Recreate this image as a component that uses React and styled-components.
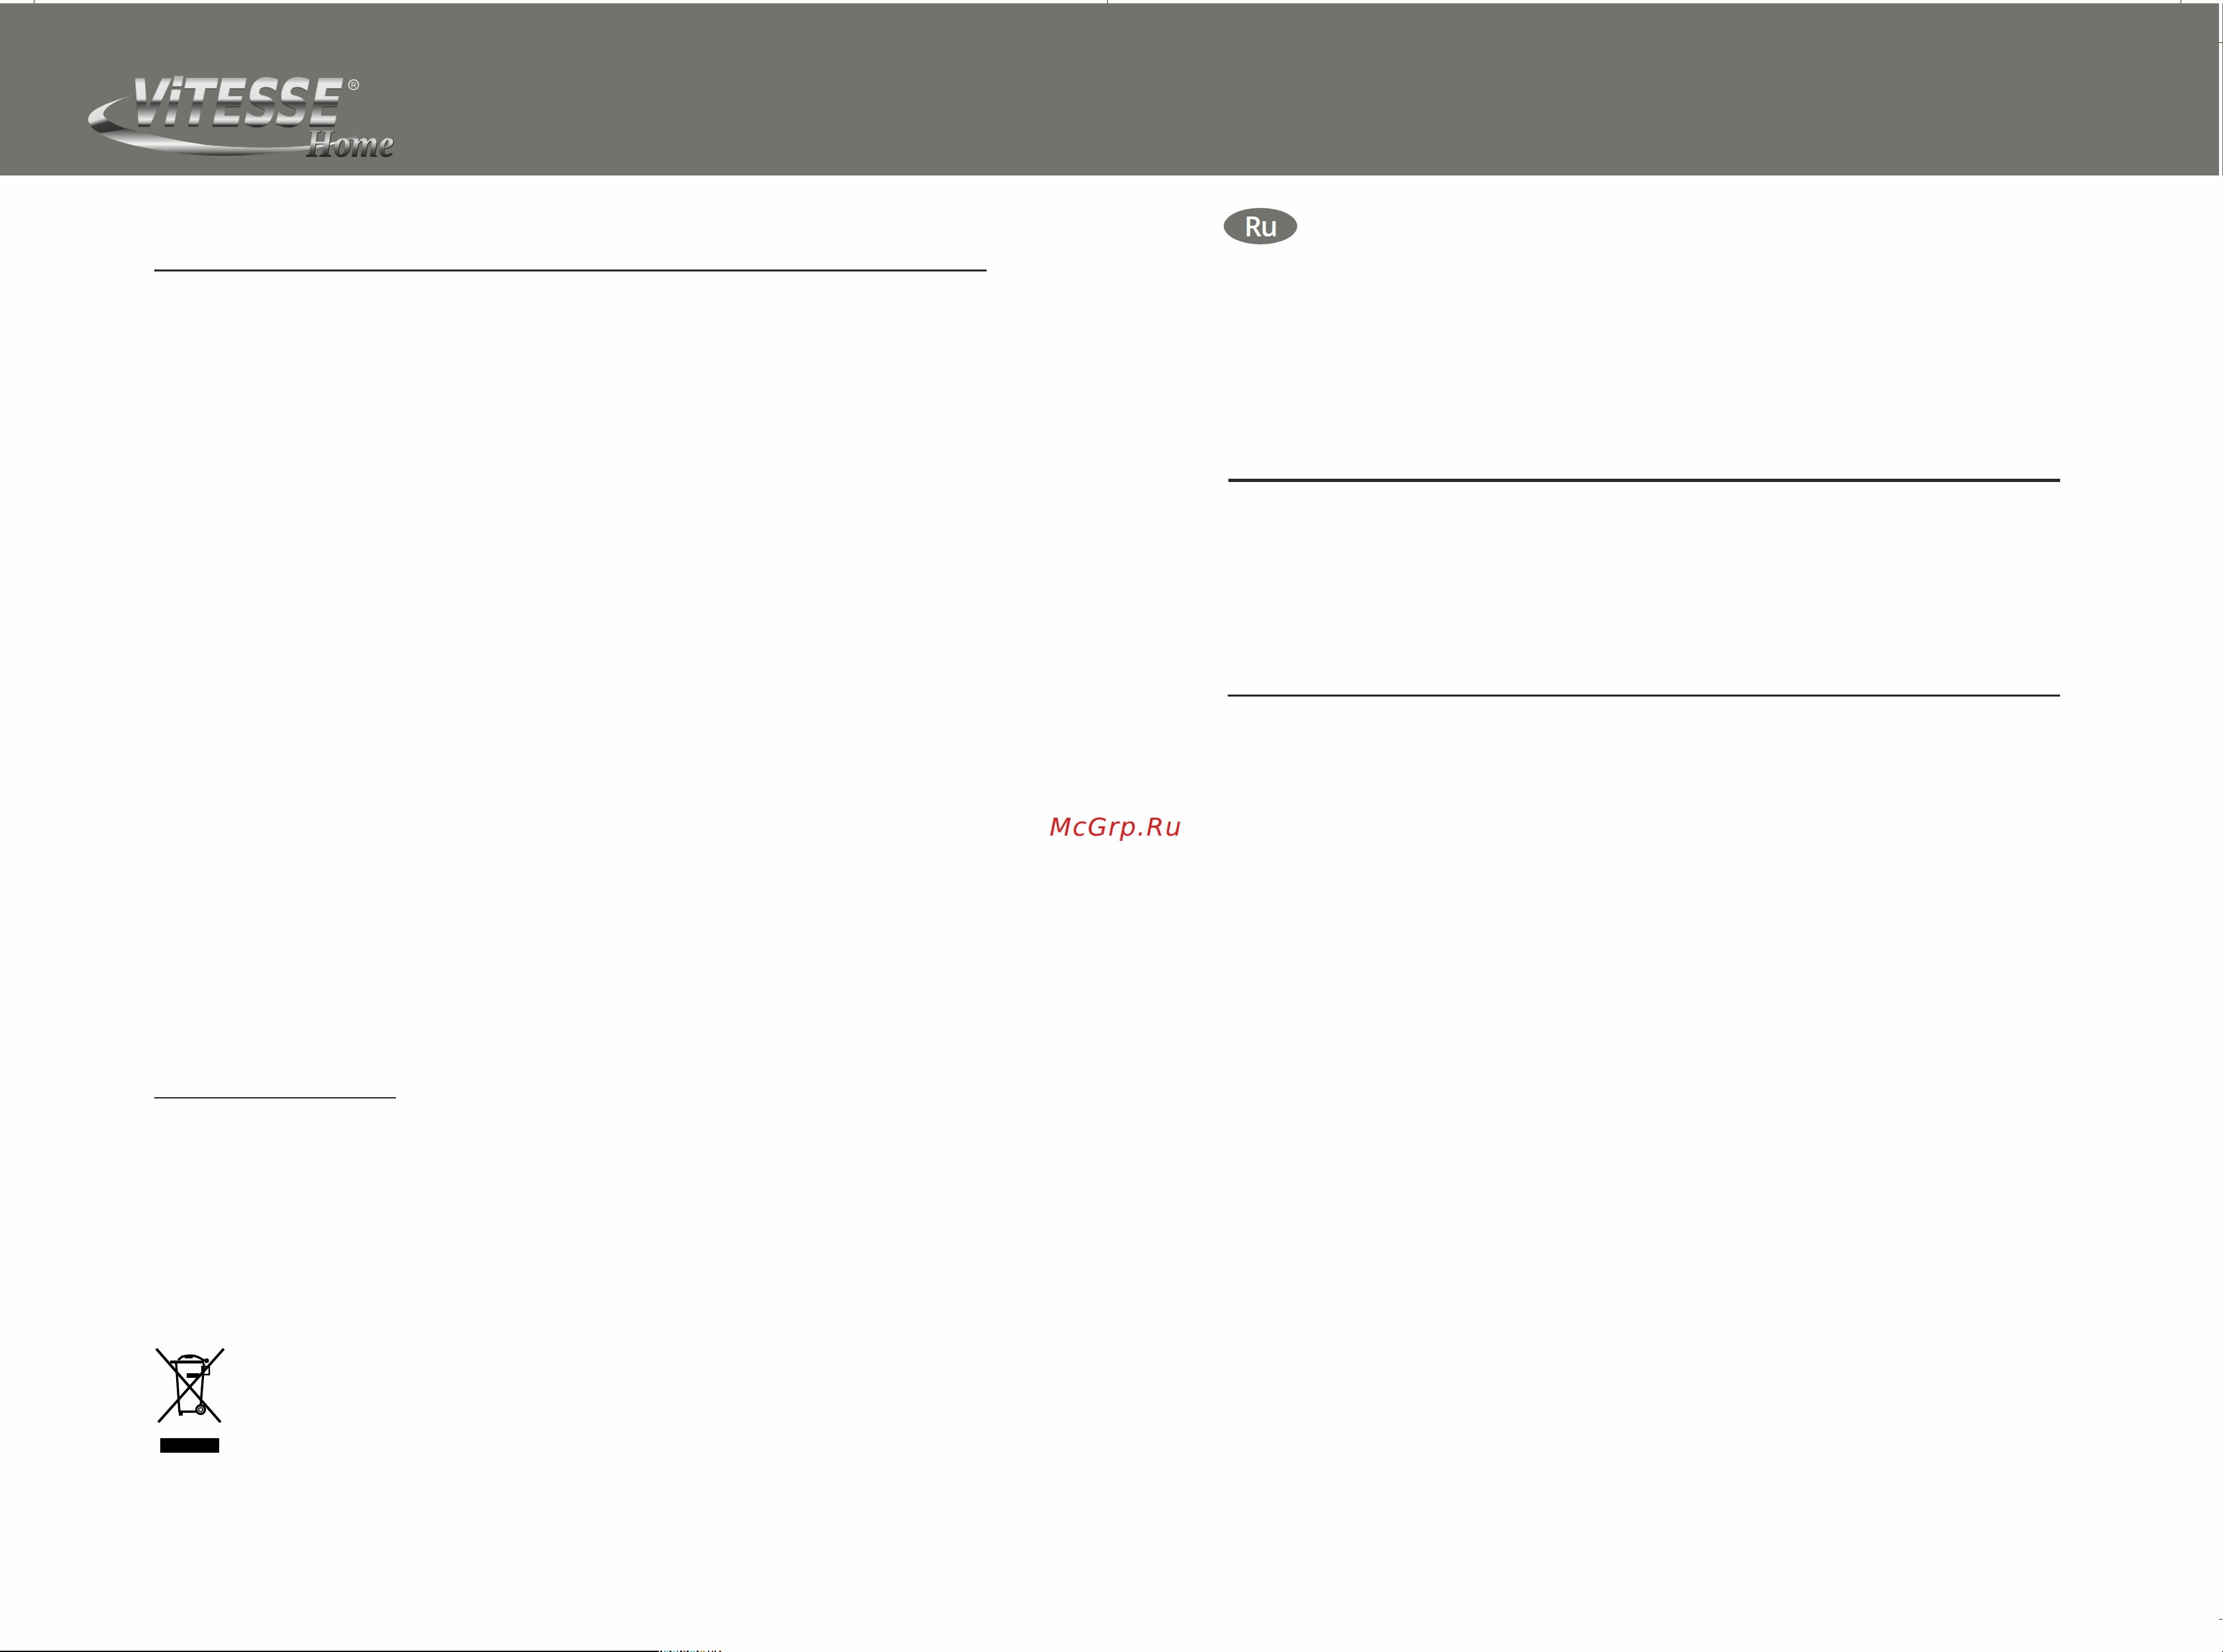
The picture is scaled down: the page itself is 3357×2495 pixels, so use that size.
import React from "react";
import styled, { createGlobalStyle } from "styled-components";

const Global = createGlobalStyle`
  html, body { margin: 0; padding: 0; background: #fefefe; }
`;

const Page = styled.div`
  position: relative;
  width: 3357px;
  height: 2495px;
  overflow: hidden;
  display: flex;
  flex-direction: column;
  background: #fefefe;
  font-family: "Open Sans", "Liberation Sans", sans-serif;
`;

const TopStrip = styled.div`
  height: 5px;
  flex: none;
  display: flex;
  padding-left: 51px;
  gap: 1620px;
`;

const TickV = styled.i`
  display: block;
  width: 1px;
  height: 5px;
  background: #2b2a29;
`;

const BandRow = styled.div`
  height: 260px;
  flex: none;
  display: flex;
`;

const Band = styled.header`
  width: 3351px;
  background: #73736d;
  padding: 95px 0 0 133px;
  box-sizing: border-box;
  svg { display: block; overflow: visible; }
`;

const EdgeLine = styled.div`
  width: 1px;
  margin-left: 5px;
  background: #73736d;
`;

const Content = styled.main`
  flex: 1;
  display: grid;
  grid-template-columns: 1854px 1fr;
`;

const LeftColumn = styled.section`
  padding: 142px 0 0 233px;
  display: flex;
  flex-direction: column;
  align-items: flex-start;
`;

const RightColumn = styled.section`
  padding-top: 49px;
  display: flex;
  flex-direction: column;
  align-items: flex-start;
`;

const Rule = styled.hr`
  margin: ${(p) => p.$top || 0}px 0 0 ${(p) => p.$left || 0}px;
  border: 0;
  width: ${(p) => p.$width}px;
  height: ${(p) => p.$thick}px;
  background: #2b2a29;
  flex: none;
`;

const LangBadge = styled.div`
  width: 111px;
  height: 55px;
  margin-left: -6px;
  border-radius: 50%;
  background: #73736d;
  color: #fff;
  display: flex;
  align-items: center;
  justify-content: center;
  font-size: 41px;
  font-weight: 600;
  letter-spacing: -1.5px;
  line-height: 1;
`;

const RecycleBox = styled.div`
  margin-top: 376px;
  width: 110px;
  height: 160px;
  flex: none;
  svg { display: block; }
`;

const Watermark = styled.div`
  position: absolute;
  left: 1585px;
  top: 1230px;
  color: #d9201f;
  font-family: "DejaVu Sans", sans-serif;
  font-style: oblique;
  font-size: 38px;
  letter-spacing: 1.9px;
  line-height: 1;
  white-space: nowrap;
`;

const BottomStrip = styled.footer`
  height: 2px;
  flex: none;
  display: flex;
`;

const BottomLine = styled.div`
  width: 995px;
  background: #111;
`;

const RegMarks = styled.div`
  display: flex;
  margin-left: 2px;
`;

const RegDash = styled.i`
  display: block;
  height: 2px;
  width: ${(p) => p.$w}px;
  margin-right: ${(p) => p.$gap}px;
  background: ${(p) => p.$c};
`;

const SideTick = styled.i`
  position: absolute;
  left: 3351px;
  top: ${(p) => p.$y}px;
  width: 5px;
  height: 1px;
  background: #2b2a29;
`;

const CornerDot = styled.i`
  position: absolute;
  left: 3356px;
  top: 2493px;
  width: 1px;
  height: 2px;
  background: #2b2a29;
`;

const BrandWord = styled.text`
  font-family: "DejaVu Sans", "Liberation Sans", sans-serif;
  font-weight: 700;
  font-size: 96px;
  filter: drop-shadow(0.5px 1.5px 0 #2a2a28);
`;

const BrandHome = styled.text`
  font-family: "Liberation Serif", serif;
  font-style: italic;
  font-weight: 700;
  font-size: 60px;
  filter: drop-shadow(1px 1.5px 0 #262624);
`;

const BrandReg = styled.text`
  font-family: "Liberation Sans", sans-serif;
  font-size: 11px;
`;

const dashes = [
  ["#111", 3, 3], ["#2ad", 2, 2], ["#2dd", 2, 2], ["#111", 3, 3], ["#2dd", 2, 3], ["#36c", 2, 3],
  ["#111", 3, 2], ["#a52", 3, 2], ["#111", 3, 3], ["#2dd", 2, 2], ["#2dd", 2, 3], ["#111", 3, 3],
  ["#c80", 2, 2], ["#d61", 2, 5], ["#228", 2, 4], ["#a11", 2, 2], ["#111", 2, 5], ["#a11", 3, 0],
];

function Logo() {
  return (
    <svg width="470" height="150" viewBox="133 100 470 150" aria-label="Vitesse Home">
      <defs>
        <linearGradient id="chrome" x1="0" y1="120" x2="0" y2="190" gradientUnits="userSpaceOnUse">
          <stop offset="0" stopColor="#b9bab8" />
          <stop offset="0.08" stopColor="#e6e7e6" />
          <stop offset="0.42" stopColor="#e2e3e2" />
          <stop offset="0.5" stopColor="#3f3f3d" />
          <stop offset="0.62" stopColor="#6f706e" />
          <stop offset="0.86" stopColor="#e9eae9" />
          <stop offset="0.93" stopColor="#b5b5b3" />
          <stop offset="1" stopColor="#232321" />
        </linearGradient>
        <linearGradient id="swoosh" x1="133" y1="143" x2="160" y2="235" gradientUnits="userSpaceOnUse">
          <stop offset="0" stopColor="#f2f2f1" />
          <stop offset="0.42" stopColor="#dcdcdb" />
          <stop offset="0.5" stopColor="#3a3a38" />
          <stop offset="1" stopColor="#1e1e1c" />
        </linearGradient>
        <linearGradient id="swooshMid" x1="0" y1="195" x2="0" y2="236" gradientUnits="userSpaceOnUse">
          <stop offset="0" stopColor="#4b4b49" />
          <stop offset="0.55" stopColor="#f4f4f3" />
          <stop offset="0.8" stopColor="#8c8c8a" />
          <stop offset="1" stopColor="#1c1c1a" />
        </linearGradient>
        <linearGradient id="homeFill" x1="0" y1="195" x2="0" y2="238" gradientUnits="userSpaceOnUse">
          <stop offset="0" stopColor="#8b8b89" />
          <stop offset="0.45" stopColor="#dedede" />
          <stop offset="0.72" stopColor="#5a5a58" />
          <stop offset="1" stopColor="#1f1f1d" />
        </linearGradient>
      </defs>
      <path
        d="M203 143 C165 154 133 165 133 181 C134 200 170 215 240 227 C290 236 340 237 390 233 C420 231 450 228 473 225 C500 220 530 210 549 202 C520 212 495 217 469 220 C420 224 370 224 312 219 C265 213 215 200 180 191 C165 185 156 180 156 172 C158 160 180 150 203 143 Z"
        fill="url(#swooshMid)"
      />
      <path
        d="M203 143 C165 154 133 165 133 181 C134 189 141 196 152 201 L190 195 C175 188 156 180 156 172 C158 160 180 150 203 143 Z"
        fill="url(#swoosh)"
      />
      <g transform="translate(36.5 0) skewX(-11)">
        <BrandWord
          x="191"
          y="189"
          textLength="319"
          lengthAdjust="spacingAndGlyphs"
          fill="url(#chrome)"
          stroke="url(#chrome)"
          strokeWidth="2"
        >
          ViTESSE
        </BrandWord>
      </g>
      <circle cx="534" cy="128" r="7.5" fill="none" stroke="#f2f2f2" strokeWidth="1.5" />
      <BrandReg x="530" y="132" fill="#f2f2f2">R</BrandReg>
      <BrandHome x="462" y="236" textLength="133" lengthAdjust="spacingAndGlyphs" fill="url(#homeFill)">
        Home
      </BrandHome>
    </svg>
  );
}

function RecycleBin() {
  return (
    <svg width="110" height="160" viewBox="233 2035 110 160" aria-label="WEEE">
      <g stroke="#000" fill="none">
        <path d="M236 2037 L333 2148 M338 2037 L239 2148" strokeWidth="4" />
        <path d="M266 2059 L271 2133 M308 2059 L303 2123 M271 2132 L297 2132" strokeWidth="3.4" />
        <path d="M257 2057 L308 2057" strokeWidth="4.4" />
        <path d="M269 2054 L275 2049 Q290 2045 300 2050 L309 2055" strokeWidth="3.4" />
        <rect x="305" y="2064" width="11" height="12" strokeWidth="2.4" />
      </g>
      <rect x="282" y="2074" width="19" height="7" fill="#000" />
      <rect x="270" y="2132" width="6" height="6" fill="#000" />
      <rect x="279" y="2049" width="12" height="2.5" fill="#000" />
      <circle cx="312" cy="2055" r="3.5" fill="#000" />
      <circle cx="303" cy="2129" r="6.5" fill="#fff" stroke="#000" strokeWidth="3.4" />
      <circle cx="303" cy="2129" r="3" fill="none" stroke="#000" strokeWidth="1.6" />
      <rect x="242" y="2172" width="89" height="22" fill="#000" />
    </svg>
  );
}

export default function App() {
  return (
    <Page>
      <Global />
      <TopStrip>
        <TickV />
        <TickV />
        <TickV />
      </TopStrip>
      <BandRow>
        <Band>
          <Logo />
        </Band>
        <EdgeLine />
      </BandRow>
      <Content>
        <LeftColumn>
          <Rule $width={1257} $thick={3} />
          <Rule $width={365} $thick={2} $top={1247} />
          <RecycleBox>
            <RecycleBin />
          </RecycleBox>
        </LeftColumn>
        <RightColumn>
          <LangBadge>Ru</LangBadge>
          <Rule $width={1256} $thick={5} $top={354} $left={1} />
          <Rule $width={1257} $thick={3} $top={321} />
        </RightColumn>
      </Content>
      <BottomStrip>
        <BottomLine />
        <RegMarks>
          {dashes.map(([c, w, gap], i) => (
            <RegDash key={i} $c={c} $w={w} $gap={gap} />
          ))}
        </RegMarks>
      </BottomStrip>
      <Watermark>McGrp.Ru</Watermark>
      <SideTick $y={64} />
      <SideTick $y={2445} />
      <CornerDot />
    </Page>
  );
}
